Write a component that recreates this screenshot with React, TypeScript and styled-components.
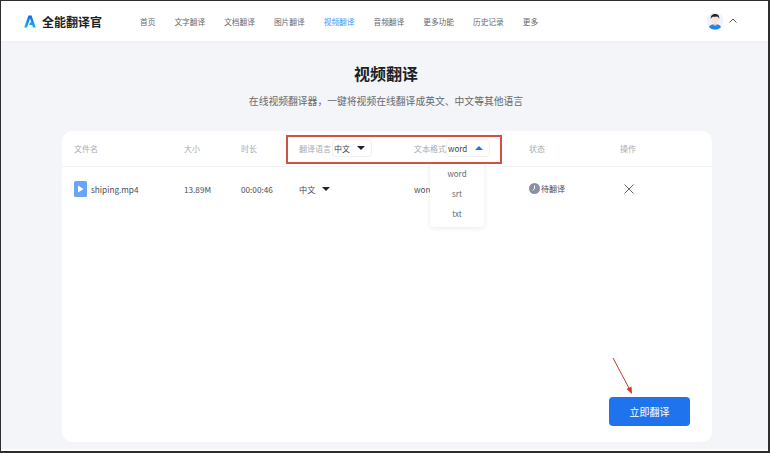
import styled, { createGlobalStyle } from "styled-components";

const GlobalStyle = createGlobalStyle`
  html, body { margin: 0; padding: 0; }
  body {
    width: 770px;
    height: 453px;
    overflow: hidden;
    font-family: "Noto Sans CJK SC", "Noto Sans", sans-serif;
  }
`;

const Frame = styled.div`
  position: relative;
  box-sizing: border-box;
  width: 770px;
  height: 453px;
  display: flex;
  flex-direction: column;
  background: #fff;
  border: solid #2e2e2e;
  border-width: 1px 2px 2px 1px;
`;

const Header = styled.header`
  display: flex;
  align-items: center;
  height: 40px;
  flex: none;
  padding: 0 30px 0 23px;
  background: #fff;
`;

const Brand = styled.div`
  display: flex;
  align-items: center;
  gap: 6px;
  width: 116px;
  font-size: 12px;
  font-weight: 700;
  color: #1c1f26;
`;

const Nav = styled.nav`
  display: flex;
  align-items: center;
  gap: 19px;
  flex: 1;
`;

const NavItem = styled.span<{ $active?: boolean }>`
  font-size: 7.7px;
  color: ${(p) => (p.$active ? "#3c98f4" : "#66696f")};
`;

const User = styled.div`
  display: flex;
  align-items: center;
  gap: 4px;
`;

const Main = styled.main`
  flex: 1;
  display: flex;
  flex-direction: column;
  align-items: center;
  padding-left: 3px;
  background: #f3f5f8;
  margin-bottom: 2px;
  box-shadow: inset 0 2px 2px -1px rgba(0, 0, 0, 0.03);
`;

const Title = styled.h1`
  margin: 21px 0 0;
  font-size: 16px;
  line-height: 22px;
  font-weight: 700;
  color: #1c1f26;
`;

const Subtitle = styled.p`
  margin: 9px 0 0;
  font-size: 9.8px;
  line-height: 16px;
  color: #66696f;
`;

const Card = styled.section`
  position: relative;
  box-sizing: border-box;
  width: 650px;
  height: 311px;
  margin-top: 22px;
  margin-left: 2px;
  background: #fff;
  border-radius: 10px;
`;

const Row = styled.div<{ $head?: boolean }>`
  display: grid;
  grid-template-columns: 110px 57px 58px 115px 115px 91px 1fr;
  align-items: center;
  height: ${(p) => (p.$head ? "34px" : "43px")};
  padding-left: 12px;
  padding-bottom: ${(p) => (p.$head ? "1px" : "0")};
  border-bottom: ${(p) => (p.$head ? "1px solid #f2f3f5" : "none")};
  font-size: ${(p) => (p.$head ? "8px" : "8.2px")};
  color: ${(p) => (p.$head ? "#a8abb2" : "#4a4d55")};
`;

const Cell = styled.div`
  display: flex;
  align-items: center;
  white-space: nowrap;
`;

const Select = styled.div<{ $width: number; $flush?: boolean }>`
  box-sizing: border-box;
  display: flex;
  align-items: center;
  justify-content: space-between;
  width: ${(p) => p.$width}px;
  height: 18px;
  margin-left: ${(p) => (p.$flush ? "0" : "1px")};
  padding: 0 6px 0 1px;
  border: 1px solid #eff0f2;
  border-radius: 3px;
  font-size: 8px;
  color: #3d4048;
`;

const Caret = styled.i<{ $up?: boolean; $blue?: boolean }>`
  width: 0;
  height: 0;
  border-left: 4px solid transparent;
  border-right: 4px solid transparent;
  border-${(p) => (p.$up ? "bottom" : "top")}: 4.5px solid ${(p) => (p.$blue ? "#1f74ee" : "#1c2230")};
`;

const LangValue = styled.span`
  margin-right: 7px;
`;

const FileName = styled.span`
  margin-left: 4px;
`;

const Status = styled.span`
  margin-left: 1px;
  font-size: 8px;
`;

const Highlight = styled.div`
  position: absolute;
  left: 224px;
  top: 4px;
  width: 216px;
  height: 29px;
  box-sizing: border-box;
  border: 2px solid #cf5247;
`;

const Dropdown = styled.ul`
  position: absolute;
  left: 368px;
  top: 33px;
  width: 54px;
  margin: 0;
  padding: 0 0 3px;
  list-style: none;
  background: #fff;
  border-radius: 4px;
  box-shadow: 0 1px 5px rgba(40, 50, 70, 0.1);
`;

const Option = styled.li`
  height: 20px;
  line-height: 20px;
  text-align: center;
  font-size: 8px;
  color: #66696f;
`;

const SubmitButton = styled.button`
  position: absolute;
  right: 22px;
  bottom: 16px;
  width: 81px;
  height: 29px;
  padding: 0;
  border: 0;
  border-radius: 4px;
  background: #1f74ee;
  color: #fff;
  font-family: inherit;
  font-size: 10px;
`;

const ArrowMark = styled.svg`
  position: absolute;
  left: 548px;
  top: 225px;
`;

const navItems = ["首页", "文字翻译", "文档翻译", "图片翻译", "视频翻译", "音频翻译", "更多功能", "历史记录", "更多"];

const App = () => {
  return (
    <Frame>
      <GlobalStyle />
      <Header>
        <Brand>
          <svg width="12" height="13" viewBox="0 0 12 13">
            <defs>
              <linearGradient id="logoA" x1="0" y1="0" x2="0" y2="1">
                <stop offset="0" stopColor="#1668e8" />
                <stop offset="1" stopColor="#18b4f8" />
              </linearGradient>
            </defs>
            <path d="M4.4 0.5h3.2L11.8 12.5H8.9L8.2 10H5.2L6 7.6H7.4L6 3.4 3.1 12.5H0.2Z" fill="url(#logoA)" />
          </svg>
          全能翻译官
        </Brand>
        <Nav>
          {navItems.map((item) => (
            <NavItem key={item} $active={item === "视频翻译"}>
              {item}
            </NavItem>
          ))}
        </Nav>
        <User>
          <svg width="18" height="18" viewBox="0 0 18 18">
            <circle cx="9" cy="9" r="8.5" fill="#eef3fa" />
            <path d="M2.8 15c1.6-2.3 3.6-3 6.2-3s4.6.7 6.2 3c-1.6 1.7-3.8 2.6-6.2 2.6S4.4 16.700 2.800 15Z" fill="#1f86e8" />
            <rect x="7.400" y="9.500" width="3.200" height="4" fill="#f8d4c4" />
            <ellipse cx="9" cy="7.500" rx="4" ry="4.300" fill="#fbe3d8" />
            <path d="M4.800 7C4.400 3.400 6.600 2 9 2s4.800 1.300 4.200 5c-.5-1.700-1.300-2.400-2.200-2.500-1.400.4-3 .4-4.300.2C5.700 5.200 5.100 5.900 4.800 7Z" fill="#1d2433" />
          </svg>
          <svg width="10" height="10" viewBox="0 0 10 10" fill="none" stroke="#555" strokeWidth="1">
            <path d="M1.500 6.500 5 3l3.500 3.500" />
          </svg>
        </User>
      </Header>
      <Main>
        <Title>视频翻译</Title>
        <Subtitle>在线视频翻译器，一键将视频在线翻译成英文、中文等其他语言</Subtitle>
        <Card>
          <Row $head>
            <Cell>文件名</Cell>
            <Cell>大小</Cell>
            <Cell>时长</Cell>
            <Cell>
              翻译语言
              <Select $width={40}>
                中文
                <Caret />
              </Select>
            </Cell>
            <Cell>
              文本格式
              <Select $width={44} $flush>
                word
                <Caret $up $blue />
              </Select>
            </Cell>
            <Cell>状态</Cell>
            <Cell>操作</Cell>
          </Row>
          <Row>
            <Cell>
              <svg width="13" height="16" viewBox="0 0 13 16">
                <rect width="13" height="16" rx="1.500" fill="#6aa5f5" />
                <path d="M4 4.500v7l5.500-3.500Z" fill="#fff" />
              </svg>
              <FileName>shiping.mp4</FileName>
            </Cell>
            <Cell>13.89M</Cell>
            <Cell>00:00:46</Cell>
            <Cell>
              <LangValue>中文</LangValue>
              <Caret />
            </Cell>
            <Cell>word</Cell>
            <Cell>
              <svg width="11" height="11" viewBox="0 0 11 11">
                <circle cx="5.500" cy="5.500" r="5.500" fill="#8b8fa8" />
                <path d="M5.500 2.500v3.300l-1.800 1.500" fill="none" stroke="#fff" strokeWidth="1" />
              </svg>
              <Status>待翻译</Status>
            </Cell>
            <Cell>
              <svg width="18" height="12" viewBox="0 0 18 12" fill="none" stroke="#666" strokeWidth="1">
                <path d="M4.500 1.500l9 9M13.500 1.500l-9 9" />
              </svg>
            </Cell>
          </Row>
          <Highlight />
          <Dropdown>
            <Option>word</Option>
            <Option>srt</Option>
            <Option>txt</Option>
          </Dropdown>
          <ArrowMark width="24" height="40" viewBox="0 0 24 40">
            <path d="M3 2 20 34" stroke="#c8392e" strokeWidth="1" />
            <path d="M22 38 16.500 33 21.500 30.500Z" fill="#c8392e" />
          </ArrowMark>
          <SubmitButton>立即翻译</SubmitButton>
        </Card>
      </Main>
    </Frame>
  );
};

export default App;
